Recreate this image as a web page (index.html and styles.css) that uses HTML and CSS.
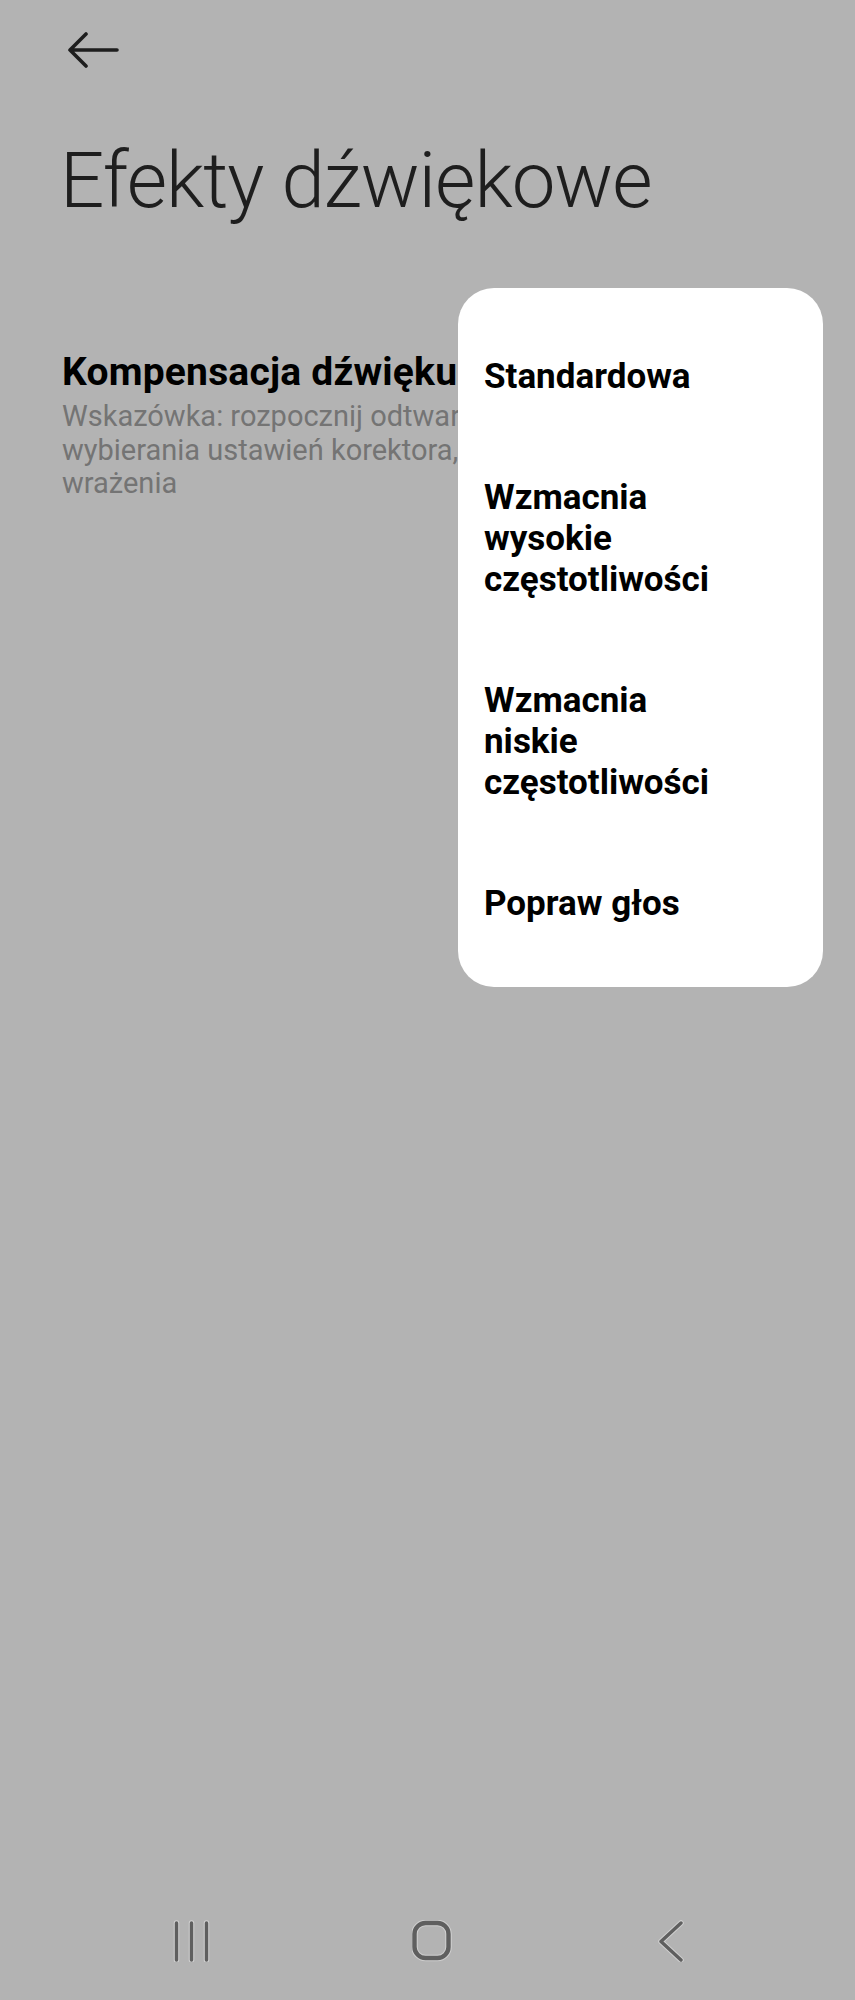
FILE: index.html
```html
<!DOCTYPE html>
<html lang="pl">
<head>
<meta charset="utf-8">
<title>Efekty dźwiękowe</title>
<link rel="stylesheet" href="styles.css">
</head>
<body>
<div class="screen">
  <header class="topbar">
    <svg class="back-arrow" width="52" height="36" viewBox="0 0 52 36">
      <path d="M2 18 H49 M18 2 L2 18 L18 34" fill="none" stroke="#1e1e1e" stroke-width="3.6" stroke-linecap="round" stroke-linejoin="round"/>
    </svg>
  </header>
  <h1 class="title">Efekty dźwiękowe</h1>
  <section class="setting">
    <div class="setting-title">Kompensacja dźwięku</div>
    <div class="setting-desc">Wskazówka: rozpocznij odtwarzanie muzyki podczas<br>wybierania ustawień korektora, aby uzyskać najlepsze<br>wrażenia</div>
  </section>

  <div class="menu">
    <div class="menu-item"><span class="menu-text">Standardowa</span></div>
    <div class="menu-item"><span class="menu-text">Wzmacnia wysokie częstotliwości</span></div>
    <div class="menu-item"><span class="menu-text">Wzmacnia niskie częstotliwości</span></div>
    <div class="menu-item"><span class="menu-text">Popraw głos</span></div>
  </div>

  <nav class="navbar">
    <div class="nav-cell">
      <svg width="40" height="42" viewBox="0 0 40 42">
        <g stroke-linecap="round">
          <path d="M4.5 3 V40 M19.5 3 V40 M34.5 3 V40" stroke="#cfcfcf" stroke-width="5.5"/>
          <path d="M4.5 3 V40 M19.5 3 V40 M34.5 3 V40" stroke="#5f5f5f" stroke-width="3.4"/>
        </g>
      </svg>
    </div>
    <div class="nav-cell">
      <svg width="40" height="42" viewBox="0 0 40 42">
        <rect x="2.5" y="3" width="34" height="35" rx="11" fill="none" stroke="#cfcfcf" stroke-width="6.5"/>
        <rect x="2.5" y="3" width="34" height="35" rx="11" fill="none" stroke="#5f5f5f" stroke-width="4.4"/>
      </svg>
    </div>
    <div class="nav-cell">
      <svg width="40" height="42" viewBox="0 0 40 42">
        <path d="M29 3 L9 21.5 L29 40" fill="none" stroke="#cfcfcf" stroke-width="5.5" stroke-linecap="round" stroke-linejoin="round"/>
        <path d="M29 3 L9 21.5 L29 40" fill="none" stroke="#5f5f5f" stroke-width="3.4" stroke-linecap="round" stroke-linejoin="round"/>
      </svg>
    </div>
  </nav>
</div>
</body>
</html>
```

FILE: styles.css
```css
* { box-sizing: border-box; }
html, body {
  margin: 0;
  padding: 0;
  background: #b3b3b3;
}
.screen {
  position: relative;
  width: 855px;
  height: 2000px;
  display: flex;
  flex-direction: column;
  font-family: Roboto, "Noto Sans", sans-serif;
  overflow: hidden;
}
.topbar {
  height: 100px;
  padding: 32px 0 0 68px;
}
.back-arrow { display: block; }
.title {
  margin: 36px 0 0 60px;
  font-size: 78px;
  line-height: 90px;
  font-weight: 300;
  color: #1e1e1e;
  letter-spacing: -1px;
  white-space: nowrap;
}
.setting {
  margin: 126px 0 0 62px;
}
.setting-title {
  font-size: 39px;
  line-height: 40px;
  font-weight: 700;
  color: #000;
  letter-spacing: 0.2px;
  white-space: nowrap;
}
.setting-desc {
  margin-top: 8px;
  font-size: 29px;
  line-height: 33.5px;
  color: #747474;
  white-space: nowrap;
}
.menu {
  position: absolute;
  left: 458px;
  top: 288px;
  width: 365px;
  background: #fff;
  border-radius: 36px;
  padding: 28px 0 23px;
}
.menu-item {
  padding: 40px 26px 40px 26px;
  font-size: 35px;
  line-height: 41px;
  font-weight: 700;
  color: #000;
}
.menu-text {
  display: block;
  max-width: 240px;
}
.navbar {
  margin-top: auto;
  padding: 0 0 38px 8px;
  display: flex;
  justify-content: center;
}
.nav-cell {
  width: 240px;
  display: flex;
  justify-content: center;
}
.nav-cell svg { display: block; }
```
